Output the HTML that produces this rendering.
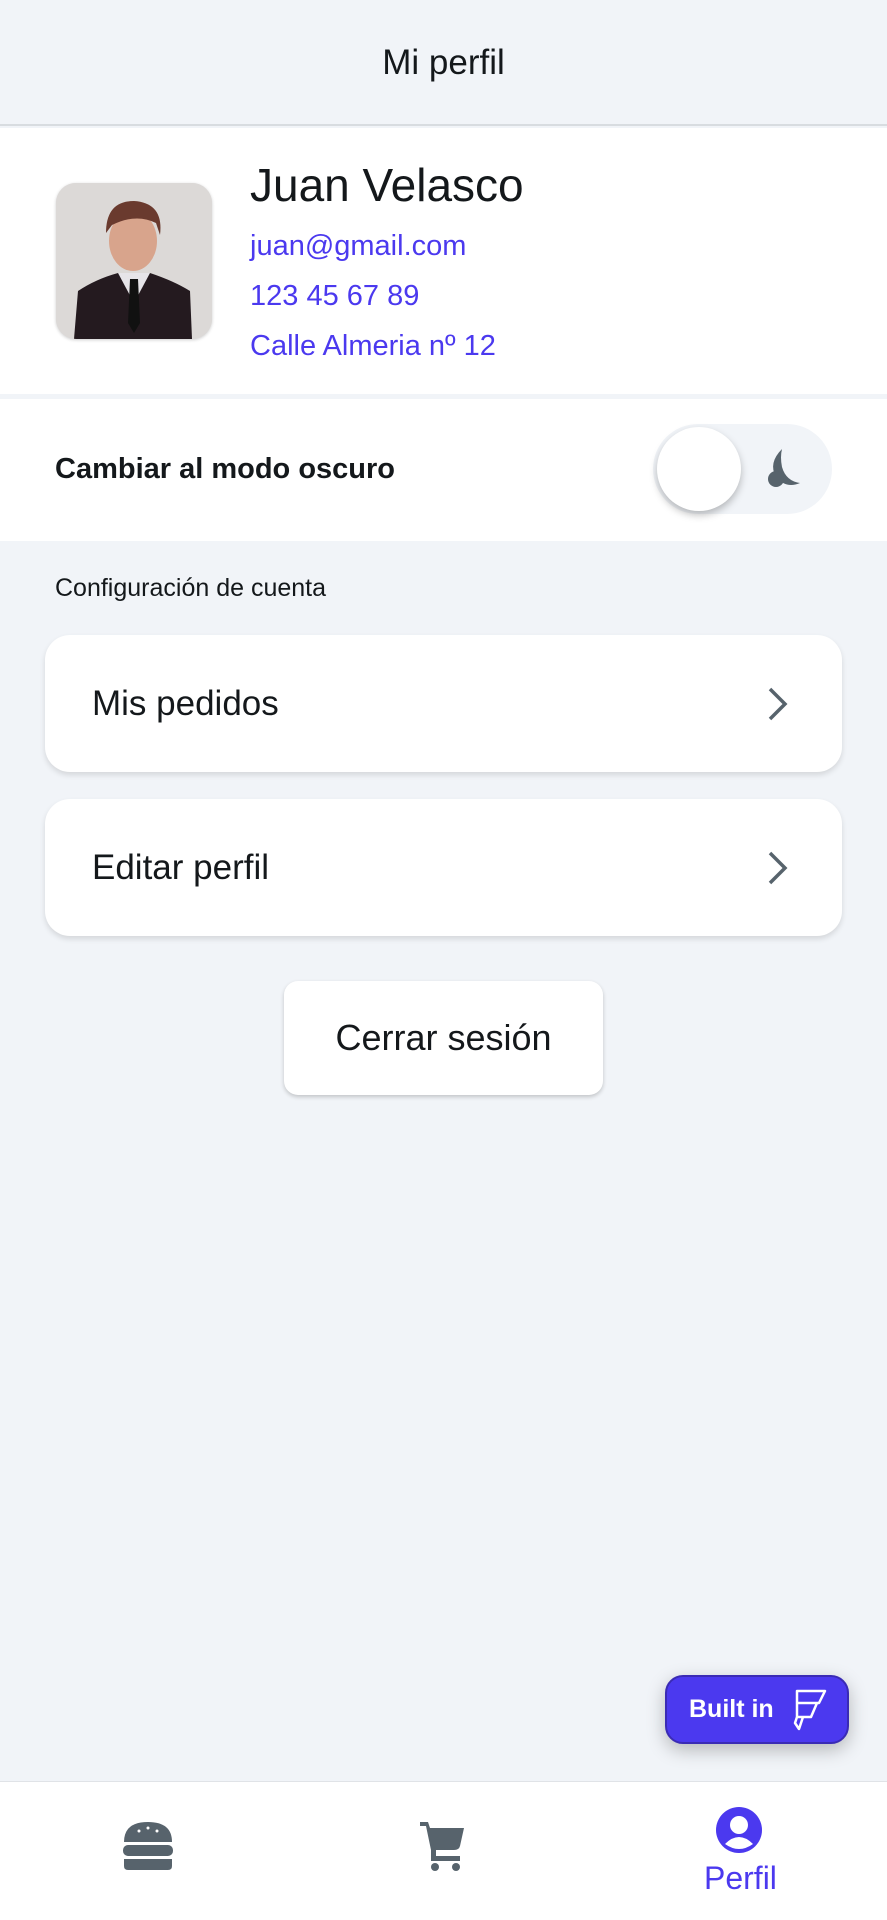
<!DOCTYPE html>
<html><head><meta charset="utf-8"><style>
*{margin:0;padding:0;box-sizing:border-box}
body{width:887px;height:1920px;background:#f1f4f8;font-family:"Liberation Sans",sans-serif;position:relative;overflow:hidden;color:#14181b}
.abs{position:absolute}
.hdr{left:0;top:0;width:887px;height:126px;background:#f1f4f8;border-bottom:2px solid #d8dce0;text-align:center;font-size:35px;line-height:126px;color:#14181b}
.prof{left:0;top:128px;width:887px;height:266px;background:#fff}
.av{left:56px;top:183px;width:156px;height:156px;border-radius:20px;background:#d9d6d4;overflow:hidden;box-shadow:0 1px 3px rgba(0,0,0,.2)}
.name{left:250px;top:158px;font-size:46px;color:#14181b}
.pl{left:250px;font-size:29px;color:#4b39ef}
.dm{left:0;top:399px;width:887px;height:142px;background:#fff}
.card{left:45px;width:797px;height:137px;background:#fff;border-radius:25px;box-shadow:0 3px 6px rgba(0,0,0,.12)}
.card span{position:absolute;left:47px;top:0;line-height:137px;font-size:35px}
.card svg{position:absolute;right:52px;top:50px}
</style></head><body>
<div class="abs hdr">Mi perfil</div>
<div class="abs prof"></div>
<div class="abs av">
<svg width="156" height="156" viewBox="0 0 156 156">
<rect width="156" height="156" fill="#dcd9d7"/>
<path d="M18 156 L22 108 Q40 96 62 90 L94 90 Q118 98 134 108 L136 156Z" fill="#241a1f"/>
<path d="M62 90 L78 120 L94 90Z" fill="#e6e4e8"/>
<path d="M74 96 L82 96 L84 140 L78 150 L72 140Z" fill="#111"/>
<ellipse cx="77" cy="58" rx="24" ry="30" fill="#d8a48c"/>
<path d="M50 50 Q50 18 78 18 Q108 20 104 52 L100 40 Q80 30 56 42Z" fill="#6a3a2e"/>
</svg></div>
<div class="abs name">Juan Velasco</div>
<div class="abs pl" style="top:230px">juan@gmail.com</div>
<div class="abs pl" style="top:280px">123 45 67 89</div>
<div class="abs pl" style="top:330px">Calle Almeria nº 12</div>
<div class="abs dm"></div>
<div class="abs" style="left:55px;top:453px;font-size:29px;font-weight:bold;color:#14181b">Cambiar al modo oscuro</div>
<div class="abs" style="left:653px;top:424px;width:179px;height:90px;border-radius:45px;background:#f1f4f8"></div>
<div class="abs" style="left:657px;top:427px;width:84px;height:84px;border-radius:50%;background:#fff;box-shadow:0 4px 8px rgba(0,0,0,.25)"></div>
<svg class="abs" style="left:764px;top:447px" width="40" height="44" viewBox="0 0 40 44"><path d="M18 2 Q4 16 12 30 Q22 42 36 36 Q22 34 18 20 Q16 10 18 2Z" fill="#57636c"/><circle cx="12" cy="32" r="8" fill="#57636c"/></svg>
<div class="abs" style="left:55px;top:574px;font-size:25px;color:#14181b">Configuración de cuenta</div>
<div class="abs card" style="top:635px"><span>Mis pedidos</span><svg width="24" height="38" viewBox="0 0 24 38"><path d="M4 4 L19 19 L4 34" stroke="#57636c" stroke-width="3.5" fill="none"/></svg></div>
<div class="abs card" style="top:799px"><span>Editar perfil</span><svg width="24" height="38" viewBox="0 0 24 38"><path d="M4 4 L19 19 L4 34" stroke="#57636c" stroke-width="3.5" fill="none"/></svg></div>
<div class="abs" style="left:284px;top:981px;width:319px;height:114px;background:#fff;border-radius:14px;box-shadow:0 2px 4px rgba(0,0,0,.2);text-align:center;line-height:114px;font-size:36px">Cerrar sesión</div>
<div class="abs" style="left:665px;top:1675px;width:184px;height:69px;background:#4b39ef;border:2px solid #3a2bb5;border-radius:18px;box-shadow:0 6px 18px rgba(0,0,0,.25);color:#fff;font-weight:bold;font-size:25px;line-height:65px;padding-left:22px">Built in
<svg style="position:absolute;left:122px;top:10px" width="40" height="46" viewBox="0 0 40 46"><path d="M8 4 L36 4 L30 16 L8 16Z M8 16 L28 16 L22 30 L8 30Z M8 30 L14 30 L10 42 L6 36Z" stroke="#fff" stroke-width="2.5" fill="none" stroke-linejoin="round"/></svg></div>
<div class="abs" style="left:0;top:1781px;width:887px;height:139px;background:#fff;border-top:1px solid #e0e3e7"></div>
<svg class="abs" style="left:122px;top:1820px" width="52" height="52" viewBox="0 0 52 52"><path d="M2 22 Q2 2 26 2 Q50 2 50 22Z" fill="#57636c"/><rect x="1" y="25" width="50" height="11" rx="5" fill="#57636c"/><path d="M2 39 L50 39 L50 46 Q50 50 46 50 L6 50 Q2 50 2 46Z" fill="#57636c"/><circle cx="17" cy="11" r="1.5" fill="#fff"/><circle cx="26" cy="8" r="1.5" fill="#fff"/><circle cx="35" cy="11" r="1.5" fill="#fff"/></svg>
<svg class="abs" style="left:418px;top:1820px" width="48" height="52" viewBox="0 0 48 52"><path d="M2 2 L10 2 L12 8 L46 8 L42 26 Q41 30 36 30 L18 30 L18 36 L42 36 L42 41 L13 41 L13 30 L8 6 L2 6Z" fill="#57636c"/><circle cx="17" cy="47" r="4" fill="#57636c"/><circle cx="38" cy="47" r="4" fill="#57636c"/></svg>
<svg class="abs" style="left:715px;top:1806px" width="48" height="48" viewBox="0 0 48 48"><circle cx="24" cy="24" r="23" fill="#4b39ef"/><circle cx="24" cy="19" r="9" fill="#fff"/><path d="M10 38 Q24 24 38 38 Q24 48 10 38Z" fill="#fff"/></svg>
<div class="abs" style="left:704px;top:1860px;font-size:32px;color:#4b39ef">Perfil</div>
</body></html>
